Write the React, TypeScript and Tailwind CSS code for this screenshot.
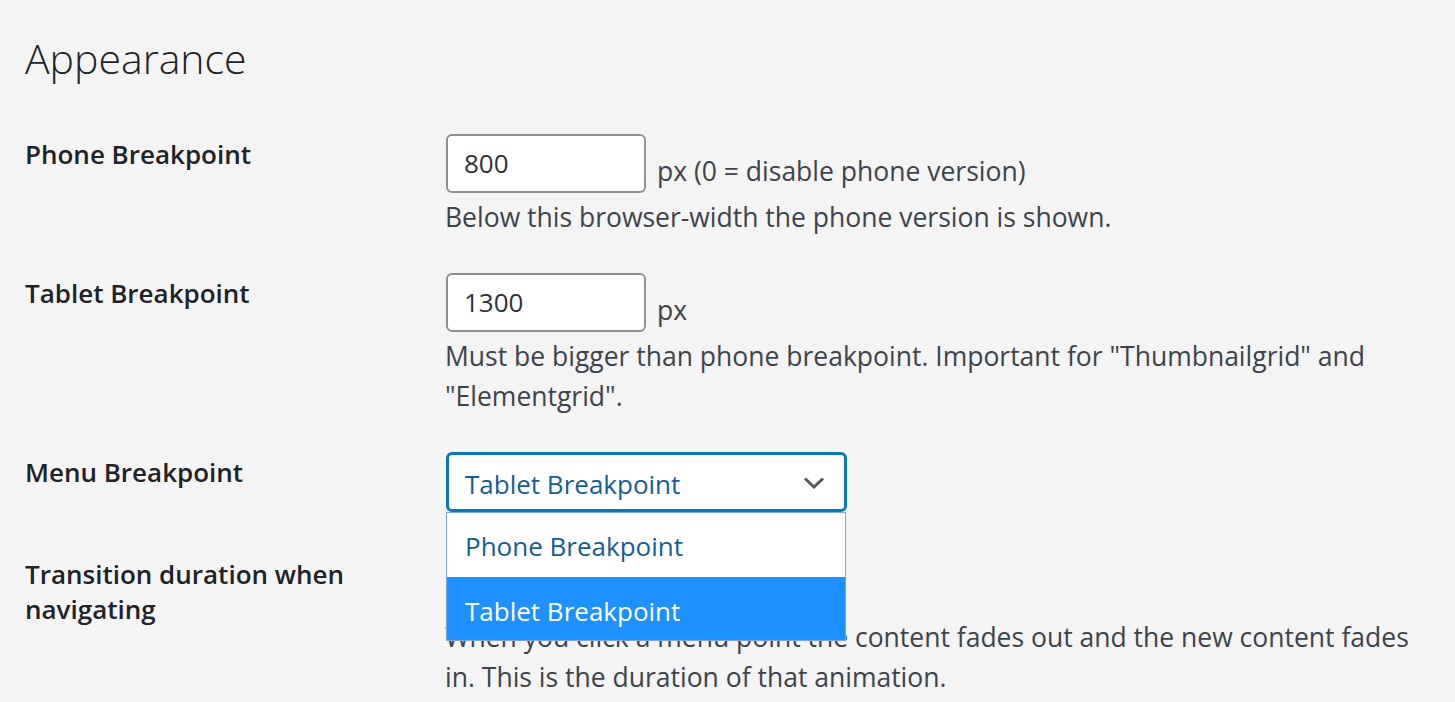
import React from "react"

const font = { fontFamily: '"Open Sans", "Noto Sans", sans-serif' }

function Row({ label, children }: { label: React.ReactNode; children: React.ReactNode }) {
    return (
        <div className="flex py-[18px]">
            <div className="w-[421px] shrink-0 pr-[60px] pt-[3px] text-[26px] leading-[35px] font-semibold text-[#1d2327]">
                {label}
            </div>
            <div className="flex-1 min-w-0">{children}</div>
        </div>
    )
}

function TextInput({ value }: { value: string }) {
    return (
        <div className="w-[200px] h-[59px] rounded-[6px] border-[2px] border-[#8c8f94] bg-white px-[16px] flex items-center text-[26px] text-[#2c3338]">
            {value}
        </div>
    )
}

function Description({ children }: { children: React.ReactNode }) {
    return <p className="-ml-[1px] mt-[4px] text-[26.5px] leading-[40px] text-[#3c434a]">{children}</p>
}

export default function App() {
    return (
        <div className="min-h-[702px] bg-[#f4f4f4] pl-[25px] pr-[38px] pt-[28px] overflow-hidden" style={font}>
            <h1 className="text-[41px] leading-[60px] font-light text-[#1d2327]">Appearance</h1>

            <div className="mt-[28px]">
                <Row label="Phone Breakpoint">
                    <div className="flex items-end gap-[11px]">
                        <TextInput value="800" />
                        <span className="mb-[2px] text-[26.5px] leading-[40px] text-[#3c434a]">px (0 = disable phone version)</span>
                    </div>
                    <Description>Below this browser-width the phone version is shown.</Description>
                </Row>

                <Row label="Tablet Breakpoint">
                    <div className="flex items-end gap-[11px]">
                        <TextInput value="1300" />
                        <span className="mb-[2px] text-[26.5px] leading-[40px] text-[#3c434a]">px</span>
                    </div>
                    <Description>
                        Must be bigger than phone breakpoint. Important for "Thumbnailgrid" and "Elementgrid".
                    </Description>
                </Row>

                <Row label="Menu Breakpoint">
                    <div className="relative w-[401px] mb-[6px]">
                        <div className="h-[60px] rounded-[6px] border-[3px] border-[#0a78b4] bg-white pl-[16px] pr-[18px] pt-[5px] flex items-center justify-between text-[26px] text-[#135e96]">
                            <span>Tablet Breakpoint</span>
                            <svg className="-mt-[4px]" width="24" height="24" viewBox="0 0 24 24" fill="none" stroke="#50575e" strokeWidth="3">
                                <path d="M3 7.5 L12 16 L21 7.5" />
                            </svg>
                        </div>
                        <ul className="absolute left-0 top-[60px] z-10 w-[400px] border border-[#7fa3db] bg-white text-[26px]">
                            <li className="h-[64px] pl-[18px] pt-[3px] flex items-center text-[#135e96]">Phone Breakpoint</li>
                            <li className="h-[63px] pl-[18px] pt-[5px] flex items-center bg-[#1e90ff] text-white">Tablet Breakpoint</li>
                        </ul>
                    </div>
                </Row>

                <Row label="Transition duration when navigating">
                    <div className="flex items-end gap-[11px]">
                        <TextInput value="300" />
                        <span className="mb-[2px] text-[26.5px] leading-[40px] text-[#3c434a]">ms</span>
                    </div>
                    <Description>
                        When you click a menu point the content fades out and the new content fades in. This is the duration of that animation.
                    </Description>
                </Row>
            </div>
        </div>
    )
}
